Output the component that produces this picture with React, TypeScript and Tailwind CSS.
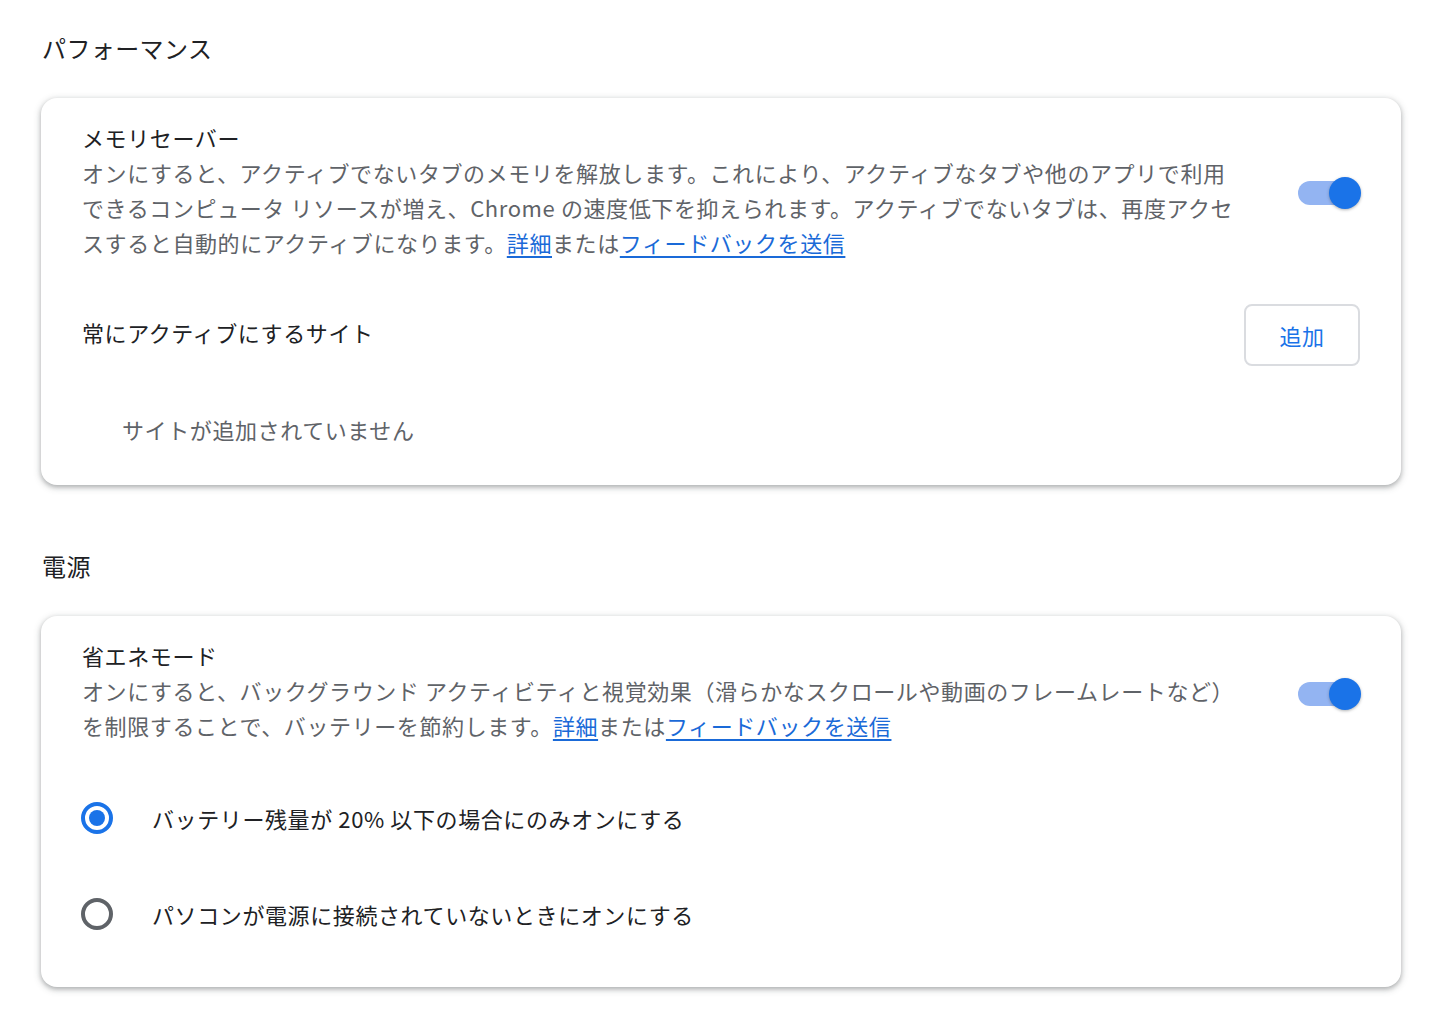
import React, { useState } from 'react';

function Toggle({ on, onChange }: { on: boolean; onChange: () => void }) {
  return (
    <button onClick={onChange} className="relative w-[64px] h-[34px] shrink-0 mt-[6px] -mr-[2px]">
      <span className={`absolute left-0 top-[5px] w-[58px] h-[24px] rounded-full ${on ? 'bg-[#93b4f2]' : 'bg-[#bdc1c6]'}`} />
      <span
        className={`absolute top-[1px] w-[32px] h-[32px] rounded-full shadow-[0_1px_3px_rgba(60,64,67,0.4)] ${
          on ? 'left-[31px] bg-[#1a73e8]' : 'left-0 bg-white'
        }`}
      />
    </button>
  );
}

function Radio({ checked, label, onSelect }: { checked: boolean; label: string; onSelect: () => void }) {
  return (
    <div className="flex items-center h-[96px] cursor-pointer -ml-px" onClick={onSelect}>
      <div
        className={`w-[32px] h-[32px] rounded-full border-[4px] flex items-center justify-center shrink-0 ${
          checked ? 'border-[#1a73e8]' : 'border-[#5f6368]'
        }`}
      >
        {checked && <div className="w-[16px] h-[16px] rounded-full bg-[#1a73e8]" />}
      </div>
      <span className="ml-[39px] text-[#202124]">{label}</span>
    </div>
  );
}

const Link = ({ children }: { children: React.ReactNode }) => (
  <a href="#" className="text-[#1a6ad8] underline underline-offset-[4px] decoration-[1.5px]">
    {children}
  </a>
);

export default function App() {
  const [memorySaver, setMemorySaver] = useState(true);
  const [energySaver, setEnergySaver] = useState(true);
  const [mode, setMode] = useState('battery');

  const cardClass =
    'w-[1360px] bg-white rounded-[16px] shadow-[0_2px_4px_rgba(60,64,67,0.3),0_2px_6px_2px_rgba(60,64,67,0.15)] px-[41px]';

  return (
    <div
      className="min-h-screen bg-white pl-[41px] pt-[30px] text-[22px] leading-[35px] tracking-[0.6px] text-[#202124]"
      style={{ fontFamily: '"Noto Sans CJK JP", "Noto Sans", sans-serif' }}
    >
      {/* Performance */}
      <h2 className="text-[24px] leading-[36px] tracking-[0.4px] pl-px">パフォーマンス</h2>
      <div className={`${cardClass} mt-[32px] pt-[22px] pb-[38px]`}>
        <div className="flex items-center">
          <div className="w-[1160px]">
            <div>メモリセーバー</div>
            <p className="text-[#5f6368]">
              オンにすると、アクティブでないタブのメモリを解放します。これにより、アクティブなタブや他のアプリで利用できるコンピュータ リソースが増え、Chrome
              の速度低下を抑えられます。アクティブでないタブは、再度アクセスすると自動的にアクティブになります。
              <Link>詳細</Link>または<Link>フィードバックを送信</Link>
            </p>
          </div>
          <div className="flex-1 flex justify-end">
            <Toggle on={memorySaver} onChange={() => setMemorySaver(!memorySaver)} />
          </div>
        </div>

        <div className="flex items-center justify-between h-[62px] mt-[44px]">
          <span className="-mt-[5px]">常にアクティブにするサイト</span>
          <button className="w-[116px] h-[62px] rounded-[8px] border-[2px] border-[#dadce0] text-[#1a73e8]">追加</button>
        </div>

        <div className="mt-[46px] pl-[40px] text-[#5f6368]">サイトが追加されていません</div>
      </div>

      {/* Power */}
      <h2 className="text-[24px] leading-[36px] tracking-[0.4px] pl-px mt-[63px]">電源</h2>
      <div className={`${cardClass} mt-[32px] pt-[22px] pb-[25px]`}>
        <div className="flex items-center">
          <div className="w-[1160px]">
            <div>省エネモード</div>
            <p className="text-[#5f6368]">
              オンにすると、バックグラウンド アクティビティと視覚効果（滑らかなスクロールや動画のフレームレートなど）を制限することで、バッテリーを節約します。
              <Link>詳細</Link>または<Link>フィードバックを送信</Link>
            </p>
          </div>
          <div className="flex-1 flex justify-end">
            <Toggle on={energySaver} onChange={() => setEnergySaver(!energySaver)} />
          </div>
        </div>

        <div className="mt-[27px]">
          <Radio
            checked={mode === 'battery'}
            label="バッテリー残量が 20% 以下の場合にのみオンにする"
            onSelect={() => setMode('battery')}
          />
          <Radio
            checked={mode === 'unplugged'}
            label="パソコンが電源に接続されていないときにオンにする"
            onSelect={() => setMode('unplugged')}
          />
        </div>
      </div>
    </div>
  );
}
